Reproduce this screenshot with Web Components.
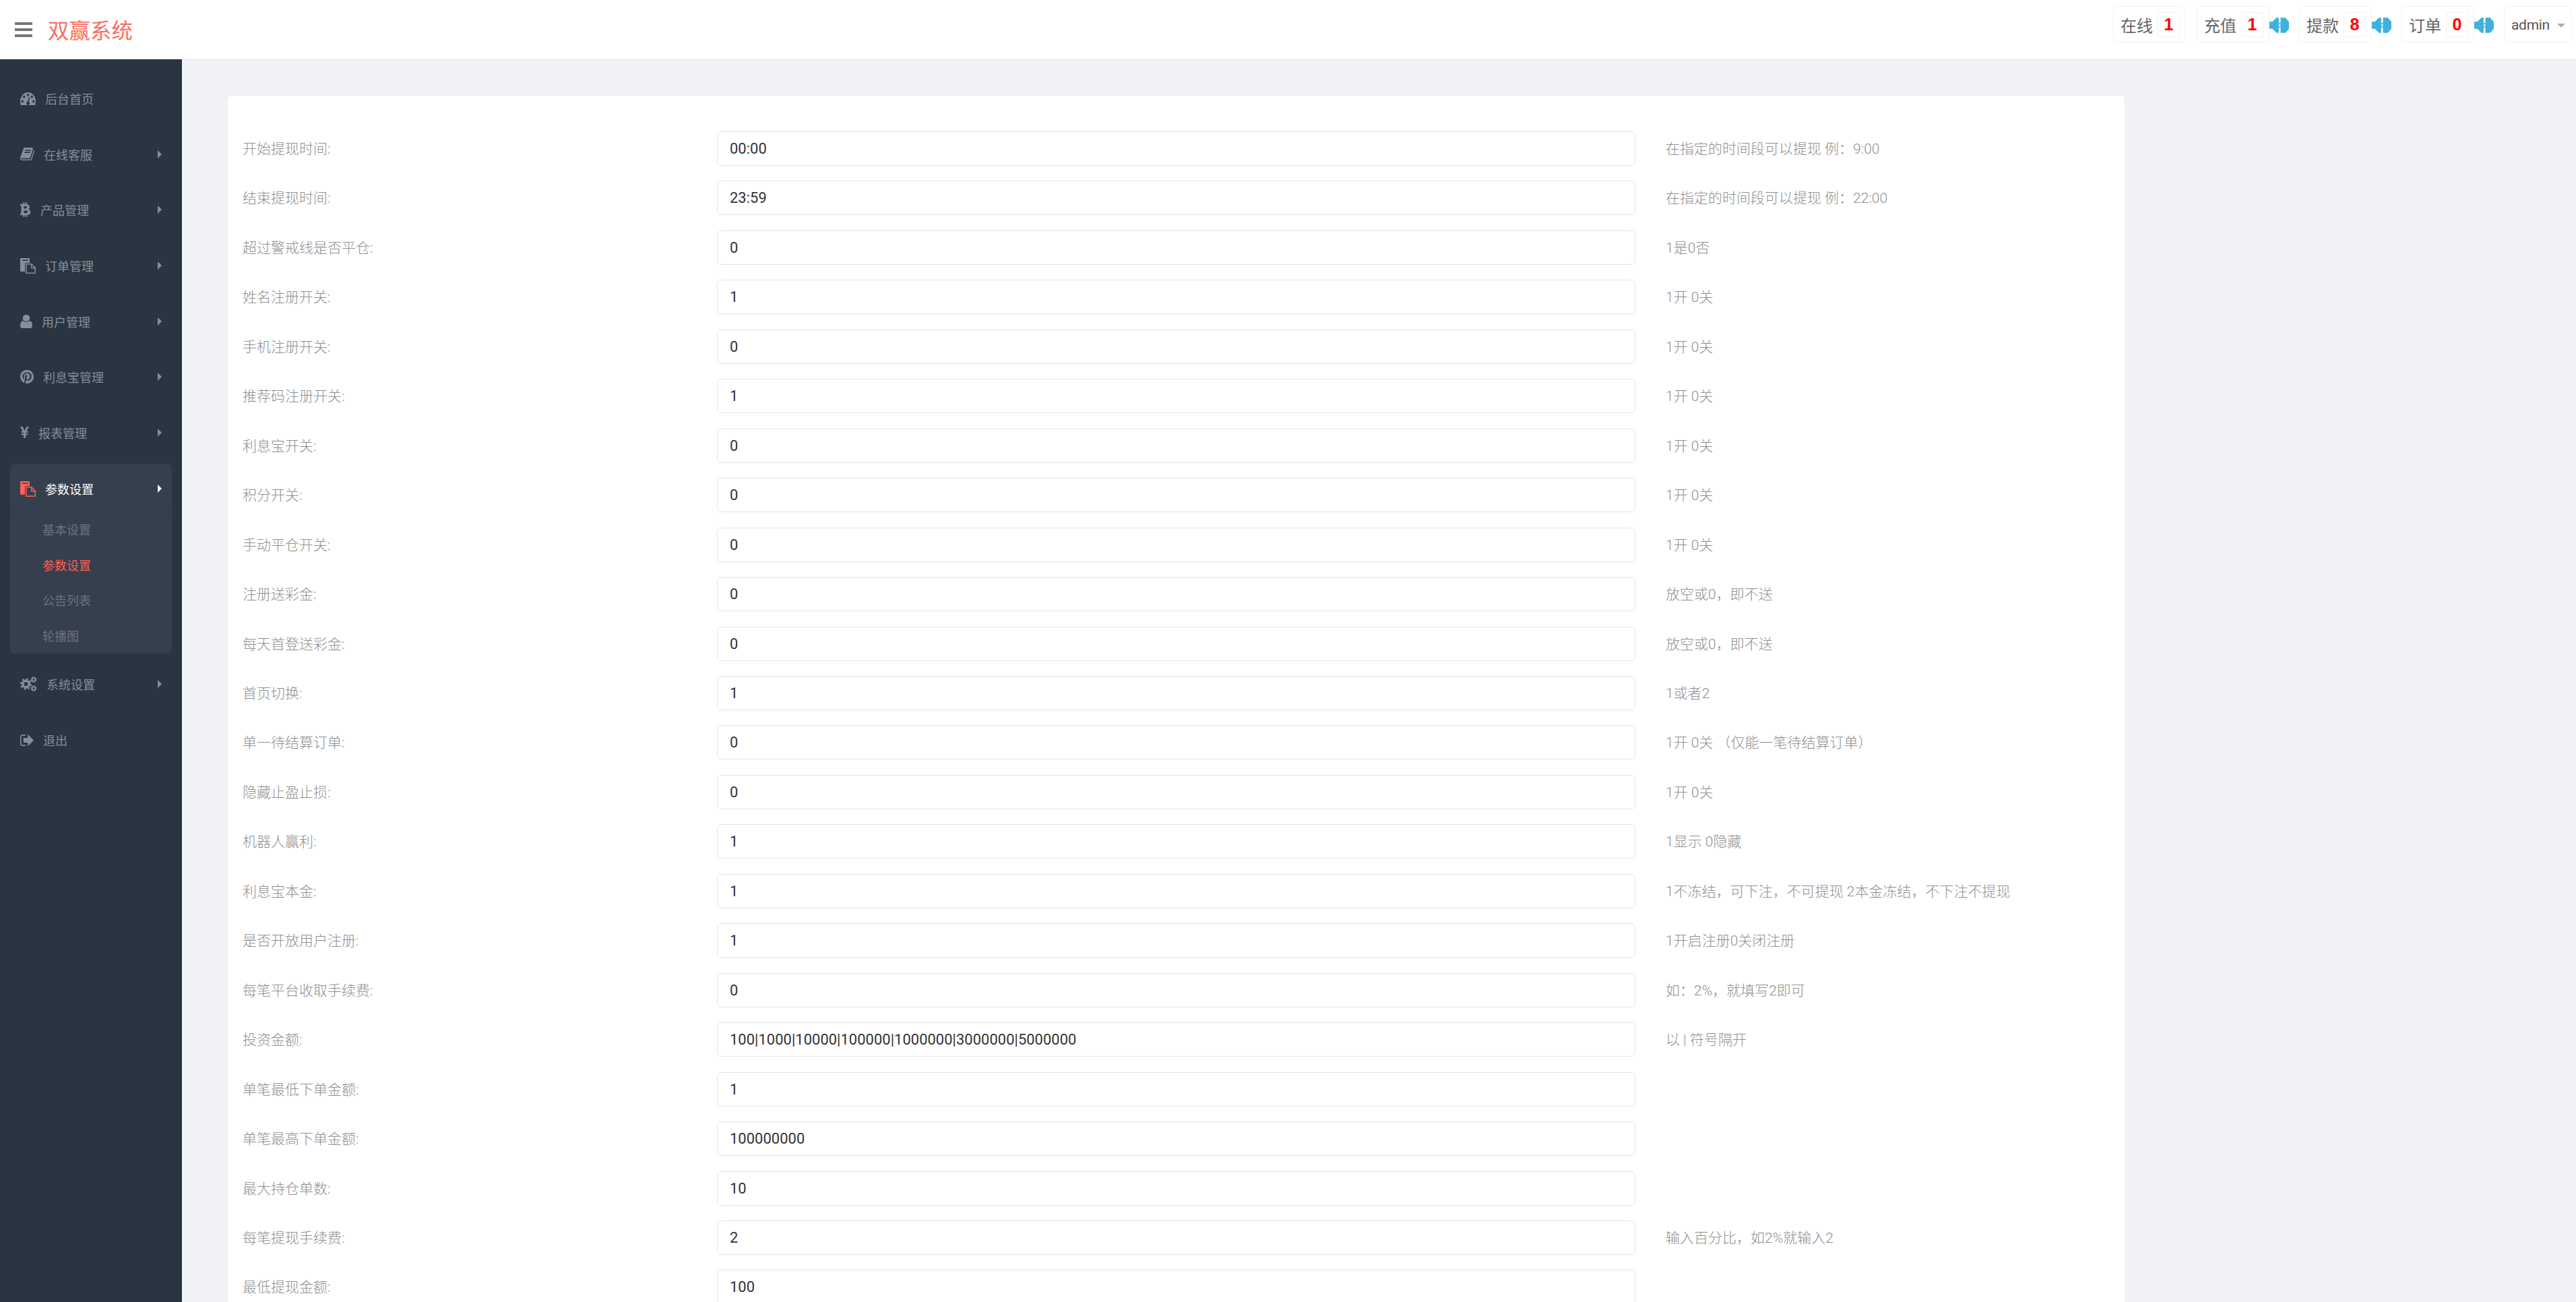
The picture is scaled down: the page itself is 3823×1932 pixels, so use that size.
<!DOCTYPE html>
<html lang="zh">
<head>
<meta charset="utf-8">
<title>双赢系统</title>
<style>
    html, body { margin: 0; height: 100%; overflow: hidden; }
    body { font-family: "Liberation Sans", "Noto Sans CJK SC", sans-serif; background: #f0f2f7; }
    app-shell > form-card { margin: 54px 0 0 68px; }
</style>
</head>
<body>
<app-shell>
    <top-bar slot="top" title="双赢系统">
        <stat-box label="在线" num="1"></stat-box>
        <stat-box label="充值" num="1" horn></stat-box>
        <stat-box label="提款" num="8" horn></stat-box>
        <stat-box label="订单" num="0" horn></stat-box>
        <user-box name="admin"></user-box>
    </top-bar>
    <side-nav slot="side">
        <nav-item icon="gauge" label="后台首页" noarrow></nav-item>
        <nav-item icon="book" label="在线客服"></nav-item>
        <nav-item icon="btc" label="产品管理"></nav-item>
        <nav-item icon="files" label="订单管理"></nav-item>
        <nav-item icon="user" label="用户管理"></nav-item>
        <nav-item icon="pin" label="利息宝管理"></nav-item>
        <nav-item icon="yen" label="报表管理"></nav-item>
        <nav-group>
            <nav-item slot="head" icon="files" label="参数设置" active></nav-item>
            <sub-link>基本设置</sub-link>
            <sub-link active>参数设置</sub-link>
            <sub-link>公告列表</sub-link>
            <sub-link>轮播图</sub-link>
        </nav-group>
        <nav-item icon="cogs" label="系统设置"></nav-item>
        <nav-item icon="out" label="退出" noarrow></nav-item>
    </side-nav>
    <form-card>
        <form-row label="开始提现时间:" value="00:00">在指定的时间段可以提现 例：9:00</form-row>
        <form-row label="结束提现时间:" value="23:59">在指定的时间段可以提现 例：22:00</form-row>
        <form-row label="超过警戒线是否平仓:" value="0">1是0否</form-row>
        <form-row label="姓名注册开关:" value="1">1开 0关</form-row>
        <form-row label="手机注册开关:" value="0">1开 0关</form-row>
        <form-row label="推荐码注册开关:" value="1">1开 0关</form-row>
        <form-row label="利息宝开关:" value="0">1开 0关</form-row>
        <form-row label="积分开关:" value="0">1开 0关</form-row>
        <form-row label="手动平仓开关:" value="0">1开 0关</form-row>
        <form-row label="注册送彩金:" value="0">放空或0，即不送</form-row>
        <form-row label="每天首登送彩金:" value="0">放空或0，即不送</form-row>
        <form-row label="首页切换:" value="1">1或者2</form-row>
        <form-row label="单一待结算订单:" value="0">1开 0关 （仅能一笔待结算订单）</form-row>
        <form-row label="隐藏止盈止损:" value="0">1开 0关</form-row>
        <form-row label="机器人赢利:" value="1">1显示 0隐藏</form-row>
        <form-row label="利息宝本金:" value="1">1不冻结，可下注，不可提现 2本金冻结，不下注不提现</form-row>
        <form-row label="是否开放用户注册:" value="1">1开启注册0关闭注册</form-row>
        <form-row label="每笔平台收取手续费:" value="0">如：2%，就填写2即可</form-row>
        <form-row label="投资金额:" value="100|1000|10000|100000|1000000|3000000|5000000">以 | 符号隔开</form-row>
        <form-row label="单笔最低下单金额:" value="1"></form-row>
        <form-row label="单笔最高下单金额:" value="100000000"></form-row>
        <form-row label="最大持仓单数:" value="10"></form-row>
        <form-row label="每笔提现手续费:" value="2">输入百分比，如2%就输入2</form-row>
        <form-row label="最低提现金额:" value="100"></form-row>
    </form-card>
</app-shell>

<script>
// icon table: viewBox, width, height, inner markup
const ICONS = {
    gauge: ["0 256 1792 1280", 23, 19, '<path d="M384 1152q0-53-37.5-90.5t-90.5-37.5-90.5 37.5-37.5 90.5 37.5 90.5 90.5 37.5 90.5-37.5 37.5-90.5zm192-448q0-53-37.5-90.5t-90.5-37.5-90.5 37.5-37.5 90.5 37.5 90.5 90.5 37.5 90.5-37.5 37.5-90.5zm428 481l101-382q6-26-7.5-48.5t-38.5-29.5-48 6.5-30 39.5l-101 382q-60 5-107 43.5t-63 98.5q-20 77 20 146t117 89 146-20 89-117q16-60-6-117t-72-91zm660-33q0-53-37.5-90.5t-90.5-37.5-90.5 37.5-37.5 90.5 37.5 90.5 90.5 37.5 90.5-37.5 37.5-90.5zm-640-640q0-53-37.5-90.5t-90.5-37.5-90.5 37.5-37.5 90.5 37.5 90.5 90.5 37.5 90.5-37.5 37.5-90.5zm448 192q0-53-37.5-90.5t-90.5-37.5-90.5 37.5-37.5 90.5 37.5 90.5 90.5 37.5 90.5-37.5 37.5-90.5zm320 448q0 261-141 483-19 29-54 29h-1402q-35 0-54-29-141-221-141-483 0-182 71-348t191-286 286-191 348-71 348 71 286 191 191 286 71 348z"/>'],
    book: ["70 130 1660 1530", 21, 19, '<path d="M1703 478q40 57 18 129l-275 906q-19 64-76.5 107.5t-122.5 43.5h-923q-77 0-148.5-53.5t-99.5-131.5q-24-67-2-127 0-4 3-27t4-37q1-8-3-21.5t-3-19.5q2-11 8-21t16.5-23.5 16.5-23.5q23-38 45-91.5t30-91.5q3-10 .5-30t-.5-28q3-11 17-28t17-23q21-36 42-92t25-90q1-9-2.5-32t.5-28q4-13 22-30.5t22-22.5q19-26 42.5-84.5t27.5-96.5q1-8-3-25.5t-2-26.5q2-8 9-18t18-23 17-21q8-12 16.5-30.5t15-35 16-36 19.5-32 26.5-23.5 36-11.5 47.5 5.5l-1 3q38-9 51-9h761q74 0 114 56t18 130l-274 906q-36 119-71.5 153.5t-128.5 34.5h-869q-27 0-38 15-11 16-1 43 24 70 144 70h923q29 0 56-15.5t35-41.5l300-987q7-22 5-57 38 15 59 43zm-1064 2q-4 13 2 22.5t20 9.5h608q13 0 25.5-9.5t16.5-22.5l21-64q4-13-2-22.5t-20-9.5h-608q-13 0-25.5 9.5t-16.5 22.5zm-83 256q-4 13 2 22.5t20 9.5h608q13 0 25.5-9.5t16.5-22.5l21-64q4-13-2-22.5t-20-9.5h-608q-13 0-25.5 9.5t-16.5 22.5z"/>'],
    btc: ["0 0 50 65", 16, 22, '<path fill-rule="evenodd" d="M0 8H14V0H20V8H25V0H31V8.5C39 10 44 15 44 22C44 27 41 31 37 32C44 34 48 38 48 45C48 52 42 56 31 57V65H25V57H20V65H14V57H0V49H5V16H0ZM17 17V28H26C30 28 31 25 31 23C31 19 29 17 25 17ZM17 37V48H28C32 48 34 46 34 42.5C34 39 32 37 28 37Z"/>'],
    files: ["0 0 23 23", 23, 23, '<path fill-rule="evenodd" d="M1 0H13L14 1V7H9C8 7 7 8 7 9V20H1C.4 20 0 19.600 0 19V1C0 .4 .4 0 1 0ZM3 2.500V4H12V2.500Z"/><path fill-rule="evenodd" d="M9 8H17L23 14V22C23 22.600 22.600 23 22 23H9C8.400 23 8 22.600 8 22V9C8 8.400 8.400 8 9 8ZM9.500 9.500V21.500H21.500V15.500H16V9.500ZM17.500 10.500V14H21Z"/>'],
    user: ["256 128 1280 1536", 18, 20, '<path d="M1536 1399q0 109-62.5 187t-150.5 78h-854q-88 0-150.5-78t-62.5-187q0-85 8.5-160.5t31.5-152 58.5-131 94-89 134.5-34.5q131 128 313 128t313-128q76 0 134.5 34.5t94 89 58.5 131 31.5 152 8.5 160.5zm-256-887q0 159-112.5 271.5t-271.5 112.5-271.5-112.5-112.5-271.5 112.5-271.5 271.5-112.5 271.5 112.5 112.5 271.5z"/>'],
    pin: ["128 128 1536 1536", 20, 20, '<path d="M1664 896q0 209-103 385.5t-279.5 279.5-385.5 103q-111 0-218-32 59-93 78-164 9-34 54-211 20 39 73 67.5t114 28.5q121 0 216-68.5t147-188.5 52-270q0-114-59.5-214t-172.5-163-255-63q-105 0-196 29t-154.5 77-109 110.5-67 129.5-21.5 134q0 104 40 183t117 111q30 12 38-20 2-7 8-31t8-30q6-23-11-43-51-61-51-151 0-151 104.5-259.5t273.5-108.5q151 0 235.5 82t84.5 213q0 170-68.5 289t-175.5 119q-61 0-98-43.5t-23-104.5q8-35 26.5-93.5t30-103 11.5-75.5q0-50-27-83t-77-33q-62 0-105 57t-43 142q0 73 25 122l-99 418q-17 70-13 177-206-91-333-281t-127-423q0-209 103-385.5t279.5-279.5 385.5-103 385.5 103 279.5 279.5 103 385.5z"/>'],
    yen: ["0 0 13 17", 13, 17, '<path d="M0 0H3.500L6.500 6L9.500 0H13L9.300 7H11.500V9H8V10.500H11.500V12.500H8V17H5V12.500H1.500V10.500H5V9H1.500V7H3.700Z"/>'],
    cogs: ["0 0 25 22", 25, 22, '<circle cx="8.500" cy="11" r="4.700" fill="none" stroke="currentColor" stroke-width="3.400"/><circle cx="8.500" cy="11" r="7.400" fill="none" stroke="currentColor" stroke-width="2.400" stroke-dasharray="3.100 2.700"/><circle cx="20" cy="4.500" r="2.400" fill="none" stroke="currentColor" stroke-width="1.800"/><circle cx="20" cy="4.500" r="3.800" fill="none" stroke="currentColor" stroke-width="1.400" stroke-dasharray="1.700 1.280"/><circle cx="20" cy="17.500" r="2.400" fill="none" stroke="currentColor" stroke-width="1.800"/><circle cx="20" cy="17.500" r="3.800" fill="none" stroke="currentColor" stroke-width="1.400" stroke-dasharray="1.700 1.280"/>'],
    out: ["64 256 1600 1280", 20, 17, '<path d="M704 1440q0 4 1 20t.5 26.500-3 23.500-10 19.500-20.500 6.500h-320q-119 0-203.500-84.500t-84.500-203.500v-704q0-119 84.500-203.500t203.500-84.500h320q13 0 22.500 9.500t9.500 22.500q0 4 1 20t.5 26.500-3 23.500-10 19.500-20.500 6.500h-320q-66 0-113 47t-47 113v704q0 66 47 113t113 47h312l11.500 1 11.500 3 8 5.500 7 9 2 13.500zm928-544q0 26-19 45l-544 544q-19 19-45 19t-45-19-19-45v-288h-448q-26 0-45-19t-19-45v-384q0-26 19-45t45-19h448v-288q0-26 19-45t45-19 45 19l544 544q19 19 19 45z"/>']
};

const iconSvg = (name) => {
    const [box, w, h, body] = ICONS[name];
    return `<svg viewBox="${box}" width="${w}" height="${h}" preserveAspectRatio="none" fill="currentColor">${body}</svg>`;
};

class AppShell extends HTMLElement {
    constructor() {
        super();
        this.attachShadow({ mode: 'open' });
        this.shadowRoot.innerHTML = `
        <style>
            :host { display: grid; grid-template-columns: 270px 1fr; grid-template-rows: 88px 1fr; height: 100vh; overflow: hidden; }
            .top { grid-column: 1 / 3; }
            main { min-width: 0; overflow: hidden; }
        </style>
        <div class="top"><slot name="top"></slot></div>
        <slot name="side"></slot>
        <main><slot></slot></main>
        `;
    }
}

class TopBar extends HTMLElement {
    constructor() {
        super();
        let title = this.getAttribute('title');
        this.attachShadow({ mode: 'open' });
        this.shadowRoot.innerHTML = `
        <style>
            :host { display: flex; align-items: center; height: 88px; box-sizing: border-box; background: #fff; border-bottom: 1px solid #eceef4; padding: 0 6px 0 22px; }
            .burger { width: 26px; height: 22px; display: flex; flex-direction: column; justify-content: space-between; margin-right: 23px; }
            .burger i { display: block; height: 4px; background: #777; }
            h1 { margin: -2px 0 0; font: 400 31.500px "Noto Sans CJK SC", sans-serif; color: #ff6c60; flex: 1; }
            .right { display: flex; align-items: center; align-self: flex-start; padding-top: 9px; }
        </style>
        <div class="burger"><i></i><i></i><i></i></div>
        <h1>${title}</h1>
        <div class="right"><slot></slot></div>
        `;
    }
}

class StatBox extends HTMLElement {
    constructor() {
        super();
        let label = this.getAttribute('label');
        let num = this.getAttribute('num');
        let horn = this.hasAttribute('horn');
        this.attachShadow({ mode: 'open' });
        this.shadowRoot.innerHTML = `
        <style>
            :host { display: flex; align-items: center; margin-right: 16px; }
            :host([horn]) { margin-right: 15px; }
            .box { display: flex; align-items: center; box-sizing: border-box; width: 108px; height: 54px; padding-left: 10px; border: 1px solid #eef0f7; border-radius: 7px; font: 24px "Noto Sans CJK SC", sans-serif; color: #666; }
            .label { width: 55px; }
            .num { box-sizing: border-box; width: 33px; height: 37px; border: 1px solid #f1f1f6; display: flex; align-items: center; justify-content: center; font: 700 25px "Liberation Sans", sans-serif; color: #f00; }
            svg { display: block; margin-top: 2px; }
        </style>
        <div class="box"><span class="label">${label}</span><span class="num">${num}</span></div>
        ${horn ? `<svg width="29" height="23" viewBox="0 0 88 68" fill="#3fb1dd"><path d="M0 18H14L32 0H42V68H32L14 50H0Z"/><path d="M50 0H72L88 18V50L72 68H50Z"/><path d="M42 24H50V30H42ZM42 38H50V44H42Z"/></svg>` : ''}
        `;
    }
}

class UserBox extends HTMLElement {
    constructor() {
        super();
        let name = this.getAttribute('name');
        this.attachShadow({ mode: 'open' });
        this.shadowRoot.innerHTML = `
        <style>
            :host { display: flex; align-items: center; box-sizing: border-box; width: 101px; height: 54px; padding: 2px 0 0 10px; border: 1px solid #eef0f7; border-radius: 7px; font: 21px Roboto, sans-serif; letter-spacing: -.3px; color: #555; }
            .caret { width: 0; height: 0; margin: 2px 0 0 11px; border: 6px solid transparent; border-top: 6px solid #a9a9c4; border-bottom: 0; }
        </style>
        <span>${name}</span><i class="caret"></i>
        `;
    }
}

class SideNav extends HTMLElement {
    constructor() {
        super();
        this.attachShadow({ mode: 'open' });
        this.shadowRoot.innerHTML = `
        <style>
            :host { display: block; background: #2a3542; padding-top: 17px; overflow: hidden; }
        </style>
        <slot></slot>
        `;
    }
}

class NavItem extends HTMLElement {
    constructor() {
        super();
        let label = this.getAttribute('label');
        let icon = this.getAttribute('icon');
        let noarrow = this.hasAttribute('noarrow');
        this.attachShadow({ mode: 'open' });
        this.shadowRoot.innerHTML = `
        <style>
            :host { display: flex; align-items: center; height: 82.600px; padding-left: 30px; position: relative; color: #868e99; font: 18px "Noto Sans CJK SC", sans-serif; }
            :host([slot=head]) { height: 72px; padding-left: 15px; padding-top: 3px; box-sizing: border-box; border-bottom: 1px solid #2f3845; color: #fff; }
            svg { display: block; margin-right: 14px; flex: none; }
            :host([active]) svg { color: #ff5f57; }
            .arrow { position: absolute; left: 234px; width: 0; height: 0; border-left: 6px solid currentColor; border-top: 6px solid transparent; border-bottom: 6px solid transparent; }
            :host([slot=head]) .arrow { left: 219px; }
        </style>
        ${iconSvg(icon)}<span>${label}</span>${noarrow ? '' : '<i class="arrow"></i>'}
        `;
    }
}

class NavGroup extends HTMLElement {
    constructor() {
        super();
        this.attachShadow({ mode: 'open' });
        this.shadowRoot.innerHTML = `
        <style>
            :host { display: block; width: 240px; margin: 5px 0 4px 15px; background: #363f4d; border-radius: 7px; }
        </style>
        <slot name="head"></slot>
        <slot></slot>
        `;
    }
}

class SubLink extends HTMLElement {
    constructor() {
        super();
        this.attachShadow({ mode: 'open' });
        this.shadowRoot.innerHTML = `
        <style>
            :host { display: flex; align-items: center; box-sizing: border-box; height: 52.500px; padding: 0 0 2px 48px; color: #6c737e; font: 18px "Noto Sans CJK SC", sans-serif; }
            :host([active]) { color: #ff5f57; }
        </style>
        <slot></slot>
        `;
    }
}

class FormCard extends HTMLElement {
    constructor() {
        super();
        this.attachShadow({ mode: 'open' });
        this.shadowRoot.innerHTML = `
        <style>
            :host { display: flex; flex-direction: column; gap: 22.460px; box-sizing: border-box; width: 2815px; padding: 53px 22px 40px; background: #fff; border-radius: 6px; }
        </style>
        <slot></slot>
        `;
    }
}

class FormRow extends HTMLElement {
    constructor() {
        super();
        let label = this.getAttribute('label');
        let value = this.getAttribute('value');
        this.attachShadow({ mode: 'open' });
        this.shadowRoot.innerHTML = `
        <style>
            :host { display: grid; grid-template-columns: 704px 1363px 1fr; align-items: center; height: 51px; font: 300 21px Roboto, "Noto Sans CJK SC", sans-serif; color: #8f8f8f; }
            .field { box-sizing: border-box; height: 51px; line-height: 49px; padding-left: 18px; border: 1px solid #e6e6e6; border-radius: 6px; background: #fff; color: #333; font-size: 22px; font-weight: 400; }
            .label, .hint { padding-bottom: 3px; }
            .hint { padding-left: 45px; }
        </style>
        <div class="label">${label}</div>
        <div class="field">${value}</div>
        <div class="hint"><slot></slot></div>
        `;
    }
}

customElements.define('app-shell', AppShell);
customElements.define('top-bar', TopBar);
customElements.define('stat-box', StatBox);
customElements.define('user-box', UserBox);
customElements.define('side-nav', SideNav);
customElements.define('nav-item', NavItem);
customElements.define('nav-group', NavGroup);
customElements.define('sub-link', SubLink);
customElements.define('form-card', FormCard);
customElements.define('form-row', FormRow);
</script>
</body>
</html>
